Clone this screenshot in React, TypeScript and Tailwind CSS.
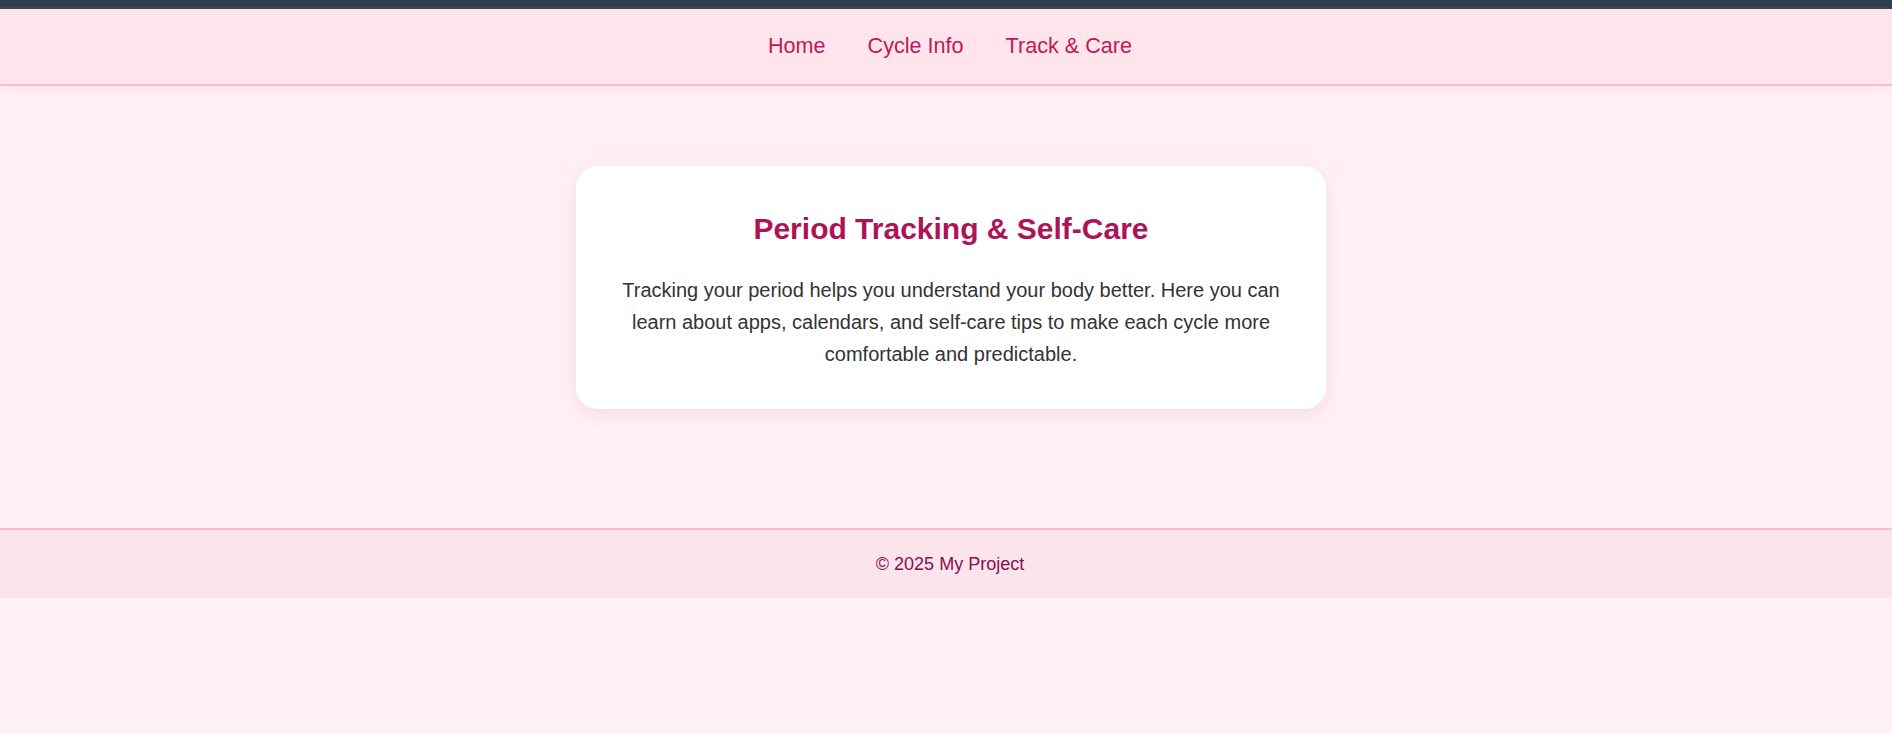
import React from "react";

export default function App() {
  const font = { fontFamily: '"Liberation Sans", Arial, sans-serif' };
  return (
    <div className="min-h-[733px] bg-[#fff0f5]" style={font}>
      <div className="h-[9px] bg-[#2c3e50] border-b-2 border-[#354556]" />
      <nav className="h-[77px] bg-[#ffe4ec] border-b-2 border-[#f8bbd9] shadow-[0_3px_8px_rgba(236,120,170,0.12)] flex items-center justify-center gap-[42px] pl-[8px] relative">
        <a className="text-[21.6px] text-[#c2185b]">Home</a>
        <a className="text-[21.6px] text-[#c2185b]">Cycle Info</a>
        <a className="text-[21.6px] text-[#c2185b]">Track &amp; Care</a>
      </nav>
      <main className="h-[442px] pt-[80px] pl-[10px] flex justify-center">
        <div className="w-[750px] h-[243px] bg-white rounded-[22px] shadow-[0_5px_18px_rgba(180,80,120,0.12)] px-[40px] pt-[45px] text-center">
          <h2 className="text-[30px] leading-[36px] font-bold text-[#ad1457] mb-[27px]">
            Period Tracking &amp; Self-Care
          </h2>
          <p className="text-[20px] leading-[32px] text-[#333333]">
            Tracking your period helps you understand your body better. Here you can learn about apps, calendars, and self-care tips to make each cycle more comfortable and predictable.
          </p>
        </div>
      </main>
      <footer className="h-[70px] bg-[#fce4ec] border-t-2 border-[#f8bbd0] pl-[8px] flex items-center justify-center">
        <span className="text-[18px] text-[#880e4f]">© 2025 My Project</span>
      </footer>
    </div>
  );
}
